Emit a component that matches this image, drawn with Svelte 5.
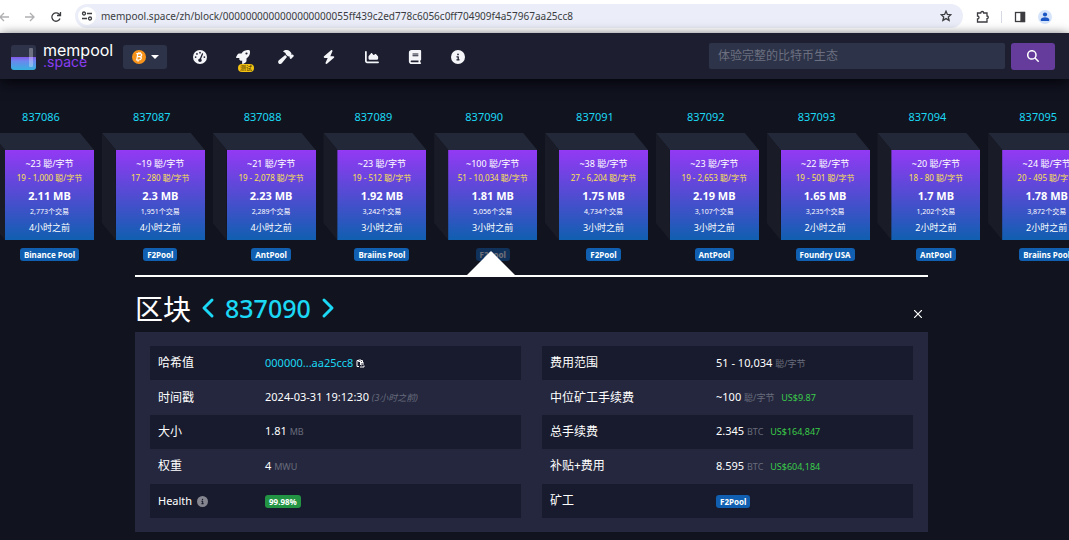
<script>
  const url = 'mempool.space/zh/block/0000000000000000000055ff439c2ed778c6056c0ff704909f4a57967aa25cc8';

  const blocks = [
    { height: 837086, fee: '~23', range: '19 - 1,000', size: '2.11 MB', txs: '2,773', hours: 4, pool: 'Binance Pool' },
    { height: 837087, fee: '~19', range: '17 - 280', size: '2.3 MB', txs: '1,951', hours: 4, pool: 'F2Pool' },
    { height: 837088, fee: '~21', range: '19 - 2,078', size: '2.23 MB', txs: '2,289', hours: 4, pool: 'AntPool' },
    { height: 837089, fee: '~23', range: '19 - 512', size: '1.92 MB', txs: '3,242', hours: 3, pool: 'Braiins Pool' },
    { height: 837090, fee: '~100', range: '51 - 10,034', size: '1.81 MB', txs: '5,056', hours: 3, pool: 'F2Pool' },
    { height: 837091, fee: '~38', range: '27 - 6,204', size: '1.75 MB', txs: '4,734', hours: 3, pool: 'F2Pool' },
    { height: 837092, fee: '~23', range: '19 - 2,653', size: '2.19 MB', txs: '3,107', hours: 3, pool: 'AntPool' },
    { height: 837093, fee: '~22', range: '19 - 501', size: '1.65 MB', txs: '3,235', hours: 2, pool: 'Foundry USA' },
    { height: 837094, fee: '~20', range: '18 - 80', size: '1.7 MB', txs: '1,202', hours: 2, pool: 'AntPool' },
    { height: 837095, fee: '~24', range: '20 - 495', size: '1.78 MB', txs: '3,872', hours: 2, pool: 'Braiins Pool' },
  ];

  let selected = $state(837090);

  const infoPath = 'M256 512A256 256 0 1 0 256 0a256 256 0 1 0 0 512zM216 336h24V272H216c-13.3 0-24-10.7-24-24s10.7-24 24-24h48c13.3 0 24 10.7 24 24v88h8c13.3 0 24 10.7 24 24s-10.7 24-24 24H216c-13.3 0-24-10.7-24-24s10.7-24 24-24zm40-208a32 32 0 1 1 0 64 32 32 0 1 1 0-64z';

  const nav = [
    { name: 'Dashboard', box: '0 0 512 512', path: 'M256 0a256 256 0 1 0 0 512a256 256 0 1 0 0-512zM256 64a32 32 0 1 1 0 64a32 32 0 1 1 0-64zM144 112a32 32 0 1 1 0 64a32 32 0 1 1 0-64zM96 224a32 32 0 1 1 0 64a32 32 0 1 1 0-64zM416 224a32 32 0 1 1 0 64a32 32 0 1 1 0-64zM357 119c12 5 18 19 13 31l-76 177c16 12 26 30 26 51c0 35-29 62-64 62s-64-27-64-62s29-66 58-66l76-180c5-12 19-18 31-13z' },
    { name: 'Accelerator', box: '0 0 512 512', beta: true, path: 'M156.6 384.9L125.7 354c-8.5-8.5-11.5-20.8-7.7-32.2c3-8.9 7-20.5 11.8-33.8L24 288c-8.6 0-16.6-4.6-20.9-12.1s-4.2-16.7 .2-24.1l52.5-88.5c13-21.9 36.5-35.3 61.9-35.3l82.3 0c2.4-4 4.8-7.7 7.2-11.3C289.1-4.1 411.1-8.1 483.9 5.3c11.6 2.1 20.6 11.2 22.8 22.8c13.4 72.9 9.3 194.8-111.4 276.7c-3.5 2.4-7.3 4.8-11.3 7.2v82.3c0 25.4-13.4 49-35.3 61.9l-88.5 52.5c-7.4 4.4-16.6 4.5-24.1 .2s-12.1-12.2-12.1-20.9V380.8c-14.1 4.9-26.4 8.9-35.7 11.9c-11.2 3.6-23.4 .5-31.8-7.8zM384 168a40 40 0 1 0 0-80 40 40 0 1 0 0 80z' },
    { name: 'Mining', box: '0 0 576 512', path: 'M413.5 237.5c-28.2 4.8-58.2-3.6-80-25.4l-38.1-38.1C280.4 159 272 138.8 272 117.6V105.5L192.3 62c-5.3-2.9-8.6-8.6-8.3-14.7s3.9-11.5 9.5-14l47.2-21C259.1 4.2 279 0 299.2 0h18.1c36.7 0 72 14 98.7 39.1l44.6 42c24.2 22.8 33.2 55.7 26.6 86L503 183l8-8c9.4-9.4 24.6-9.4 33.9 0l24 24c9.4 9.4 9.4 24.6 0 33.9l-88 88c-9.4 9.4-24.6 9.4-33.9 0l-24-24c-9.4-9.4-9.4-24.6 0-33.9l8-8-17.5-17.5zM27.4 377.1L260.9 182.6c3.5 4.9 7.5 9.6 11.8 14l38.1 38.1c6 6 12.4 11.2 19.2 15.7L134.9 484.6c-14.5 17.4-36 27.4-58.6 27.4C34.1 512 0 477.8 0 435.7c0-22.6 10.1-44.1 27.4-58.6z' },
    { name: 'Lightning', box: '0 0 448 512', path: 'M349.4 44.6c5.9-13.7 1.5-29.7-10.6-38.5s-28.6-8-39.9 1.8l-256 224c-10 8.8-13.6 22.9-8.9 35.3S50.7 288 64 288H175.5L98.6 467.4c-5.9 13.7-1.5 29.7 10.6 38.5s28.6 8 39.9-1.8l256-224c10-8.8 13.6-22.9 8.9-35.3s-16.6-20.7-30-20.7H272.5L349.4 44.6z' },
    { name: 'Graphs', box: '0 0 512 512', path: 'M64 64c0-17.7-14.3-32-32-32S0 46.3 0 64V400c0 44.2 35.8 80 80 80H480c17.7 0 32-14.3 32-32s-14.3-32-32-32H80c-8.8 0-16-7.2-16-16V64zm96 288H448c17.7 0 32-14.3 32-32V251.8c0-7.6-2.7-15-7.7-20.8l-65.8-76.8c-12.1-14.2-33.7-15-46.9-1.8l-21 21c-10 10-26.4 9.2-35.4-1.6l-39.2-47c-12.6-15.1-35.7-15.4-48.7-.6L135.9 215c-5.1 5.8-7.9 13.3-7.9 21.1v84c0 17.7 14.3 32 32 32z' },
    { name: 'Docs', box: '0 0 448 512', path: 'M96 0C43 0 0 43 0 96V416c0 53 43 96 96 96H384h32c17.7 0 32-14.3 32-32s-14.3-32-32-32V384c17.7 0 32-14.3 32-32V32c0-17.7-14.3-32-32-32H384 96zm0 384H352v64H96c-17.7 0-32-14.3-32-32s14.3-32 32-32zm32-240c0-8.8 7.2-16 16-16H336c8.8 0 16 7.2 16 16s-7.2 16-16 16H144c-8.8 0-16-7.2-16-16zm16 48H336c8.8 0 16 7.2 16 16s-7.2 16-16 16H144c-8.8 0-16-7.2-16-16s7.2-16 16-16z' },
    { name: 'About', box: '0 0 512 512', path: infoPath },
  ];
</script>

<div class="browser">
  <div class="browser-nav">
    <button class="plain faded" aria-label="Back">
      <svg width="12" height="12" viewBox="0 0 12 12"><path d="M11 6H2M6 2L2 6l4 4" /></svg>
    </button>
    <button class="plain faded" aria-label="Forward">
      <svg width="12" height="12" viewBox="0 0 12 12"><path d="M1 6h9M6 2l4 4-4 4" /></svg>
    </button>
    <button class="plain" aria-label="Reload">
      <svg width="12" height="12" viewBox="0 0 12 12"><path d="M10 7.500A4.200 4.200 0 1 1 9 3L10.300 4.300M10.500 1v3.500H7" /></svg>
    </button>
  </div>
  <div class="address">
    <button class="site-info" aria-label="Site information">
      <svg width="12" height="12" viewBox="0 0 12 12"><path d="M6 3.500h5M1 8.500h5" /><circle cx="3" cy="3.500" r="1.500" /><circle cx="9" cy="8.500" r="1.500" /></svg>
    </button>
    <input class="url" type="text" aria-label="Address" value={url} />
    <button class="plain" aria-label="Bookmark">
      <svg width="12" height="12" viewBox="0 0 12 12"><path d="M6 1.200l1.400 3.200 3.500.3-2.600 2.300.8 3.400L6 8.600l-3.100 1.800.8-3.400L1.100 4.700l3.500-.3z" /></svg>
    </button>
  </div>
  <div class="browser-tools">
    <button class="plain" aria-label="Extensions">
      <svg width="13" height="13" viewBox="0 0 13 13"><path d="M1.500 3h3.200a1.500 1.500 0 0 1 3 0H11v3a1.300 1.300 0 0 1 0 2.600V12H1.500V9a1.500 1.500 0 0 0 0-3z" /></svg>
    </button>
    <span class="separator"></span>
    <button class="plain" aria-label="Side panel">
      <svg width="12" height="12" viewBox="0 0 12 12"><rect x="1.500" y="1.500" width="9" height="9" /><rect x="7" y="1.500" width="3.500" height="9" fill="#3c3d41" /></svg>
    </button>
    <button class="plain" aria-label="Profile">
      <svg width="14" height="14" viewBox="0 0 14 14"><circle class="avatar" cx="7" cy="7" r="7" /><circle class="person" cx="7" cy="4.500" r="2.100" /><path class="person" d="M2.800 11V9.600C2.800 8 5.500 7.300 7 7.300s4.200.7 4.200 2.300V11z" /></svg>
    </button>
  </div>
</div>

<header>
  <a class="logo" href="#home">
    <svg width="25" height="25" viewBox="0 0 25 25">
      <defs>
        <linearGradient id="liquid" x1="0" y1="0" x2="0" y2="1">
          <stop offset="0" stop-color="#8557ea" />
          <stop offset="0.300" stop-color="#6c86ee" />
          <stop offset="1" stop-color="#35b2de" />
        </linearGradient>
      </defs>
      <path d="M3 0h19a3 3 0 0 1 3 3v10H0V3a3 3 0 0 1 3-3z" fill="#2e3349" />
      <path d="M0 12h25v10a3 3 0 0 1-3 3H3a3 3 0 0 1-3-3z" fill="url(#liquid)" />
      <rect x="18" y="3" width="4" height="19" rx="1" fill="#fff" opacity="0.300" />
    </svg>
    <span class="wordmark">mempool<span>.space</span></span>
  </a>

  <button class="network" aria-label="Network">
    <svg width="14" height="14" viewBox="0 0 14 14">
      <circle cx="7" cy="7" r="7" fill="#f7931a" />
      <path d="M5.800 3.600L4.700 10M4.300 3.600h3.800c2.500.1 2 3.100-.5 3.100H5.400h2.300c2.500.1 2 3.300-.8 3.300H3.800M7 2.200l-.3 1.400M6.200 10l-.3 1.600M8.500 2.400l-.3 1.400" fill="none" stroke="#fff" stroke-width="1.200" />
    </svg>
    <span class="caret"></span>
  </button>

  <nav>
    {#each nav as item}
      <a href="#{item.name}" aria-label={item.name}>
        <svg width="16" height="14" viewBox={item.box} fill-rule="evenodd"><path d={item.path} /></svg>
        {#if item.beta}<span class="beta">测试</span>{/if}
      </a>
    {/each}
  </nav>

  <form class="search">
    <input type="text" aria-label="Search" placeholder="体验完整的比特币生态" />
    <button type="button" aria-label="Search">
      <svg width="12" height="12" viewBox="0 0 512 512"><path d="M416 208c0 45.900-14.900 88.300-40 122.700L502.600 457.400c12.500 12.500 12.500 32.800 0 45.300s-32.800 12.500-45.300 0L330.700 376c-34.400 25.200-76.800 40-122.700 40C93.100 416 0 322.900 0 208S93.100 0 208 0S416 93.100 416 208zM208 352a144 144 0 1 0 0-288 144 144 0 1 0 0 288z" /></svg>
    </button>
  </form>
</header>

<main>
  <div class="chain">
    {#each blocks as block}
      <div class="block" class:selected={block.height === selected}>
        <a class="height" href="#{block.height}" onclick={() => (selected = block.height)}>{block.height}</a>
        <div class="cube">
          <div class="face">
            <div class="fee">{block.fee} 聪/字节</div>
            <div class="range">{block.range} 聪/字节</div>
            <div class="size">{block.size}</div>
            <div class="txs">{block.txs}个交易</div>
            <div class="time">{block.hours}小时之前</div>
          </div>
        </div>
        <a class="badge pool" href="#{block.pool}">{block.pool}</a>
      </div>
    {/each}
  </div>

  <section class="details">
    <div class="title">
      <h1>区块</h1>
      <button class="step" aria-label="Previous block" onclick={() => selected--}>
        <svg width="14" height="22" viewBox="0 0 14 22"><path d="M11 3L3 11l8 8" /></svg>
      </button>
      <a href="#{selected}">{selected}</a>
      <button class="step" aria-label="Next block" onclick={() => selected++}>
        <svg width="14" height="22" viewBox="0 0 14 22"><path d="M3 3l8 8-8 8" /></svg>
      </button>
      <button class="close" aria-label="Close">
        <svg width="8" height="8" viewBox="0 0 8 8"><path d="M0 0l8 8M8 0L0 8" /></svg>
      </button>
    </div>

    <div class="panel">
      <table class="left">
        <tbody>
          <tr>
            <th scope="row">哈希值</th>
            <td>
              <a href="#hash">000000...aa25cc8</a>
              <button class="copy" aria-label="Copy">
                <svg width="9" height="9" viewBox="0 0 9 9"><path d="M3 7.500H1V1.500h1.500M5 1.500h1.500V3M2.500 1h2.500v1.500H2.500zM4 3.500h3.500M8 5H4M5.500 3.800L4 5l1.500 1.200M4 8h4V6.500" /></svg>
              </button>
            </td>
          </tr>
          <tr><th scope="row">时间戳</th><td>2024-03-31 19:12:30 <i class="unit">(3小时之前)</i></td></tr>
          <tr><th scope="row">大小</th><td>1.81 <span class="unit">MB</span></td></tr>
          <tr><th scope="row">权重</th><td>4 <span class="unit">MWU</span></td></tr>
          <tr>
            <th scope="row" class="latin">Health <svg class="info" width="11" height="11" viewBox="0 0 512 512"><path fill-rule="evenodd" d={infoPath} /></svg></th>
            <td><span class="badge health">99.98%</span></td>
          </tr>
        </tbody>
      </table>

      <table class="right">
        <tbody>
          <tr><th scope="row">费用范围</th><td>51 - 10,034 <span class="unit">聪/字节</span></td></tr>
          <tr><th scope="row">中位矿工手续费</th><td>~100 <span class="unit">聪/字节</span> <span class="fiat">US$9.87</span></td></tr>
          <tr><th scope="row">总手续费</th><td>2.345 <span class="unit">BTC</span> <span class="fiat">US$164,847</span></td></tr>
          <tr><th scope="row">补贴+费用</th><td>8.595 <span class="unit">BTC</span> <span class="fiat">US$604,184</span></td></tr>
          <tr><th scope="row">矿工</th><td><a class="badge" href="#F2Pool">F2Pool</a></td></tr>
        </tbody>
      </table>
    </div>
  </section>
</main>

<style>
  :global(body) {
    background: #11131f;
    color: #fff;
    font-family: "Noto Sans", "Noto Sans CJK SC", sans-serif;
    font-size: 11px;
    overflow-x: hidden;
  }

  a {
    color: #1bd8f4;
    text-decoration: none;
  }

  button {
    border: 0;
    padding: 0;
    background: none;
    color: inherit;
    font: inherit;
    cursor: pointer;
  }

  svg {
    display: block;
  }

  /* Browser toolbar */

  .browser {
    display: flex;
    align-items: center;
    height: 33px;
    background: #fff;
  }

  .browser-nav {
    display: flex;
    gap: 14px;
    width: 75px;
  }

  .browser-nav .plain:first-child {
    margin-left: -2px;
  }

  .browser svg {
    fill: none;
    stroke: #3c3d41;
    stroke-width: 1.300;
  }

  .browser .faded svg {
    stroke: #b0b0b3;
  }

  .address {
    display: flex;
    align-items: center;
    flex: 1;
    height: 24px;
    padding: 0 11px 0 3px;
    border-radius: 12px;
    background: #ebeef8;
    margin-bottom: 1px;
  }

  .site-info {
    display: grid;
    place-items: center;
    width: 18px;
    height: 18px;
    border-radius: 50%;
    background: #fff;
  }

  .url {
    flex: 1;
    min-width: 0;
    margin-left: 5px;
    padding: 0;
    border: 0;
    outline: 0;
    background: none;
    color: #3a3c42;
    font: 10px "Noto Sans", sans-serif;
  }

  .browser-tools {
    display: flex;
    align-items: center;
    gap: 12px;
    padding: 0 17px 0 13px;
  }

  .separator {
    width: 1px;
    height: 12px;
    background: #d5d9e4;
  }

  .browser .avatar {
    fill: #d5e4fb;
    stroke: none;
  }

  .browser .person {
    fill: #1a56c4;
    stroke: none;
  }

  /* Site header */

  header {
    position: relative;
    z-index: 1;
    display: flex;
    align-items: center;
    height: 44px;
    padding: 2px 14px 0 11px;
    background: #1d1f31;
    box-shadow: 0 4px 12px #04050b;
  }

  .logo {
    display: flex;
    align-items: center;
    gap: 7px;
    width: 112px;
  }

  .wordmark {
    color: #fff;
    font: 16px/12px Inter, sans-serif;
    padding-bottom: 3px;
  }

  .wordmark span {
    display: block;
    color: #8a3df0;
    font-size: 14px;
  }

  .network {
    display: flex;
    align-items: center;
    justify-content: center;
    gap: 5px;
    width: 44px;
    height: 24px;
    border-radius: 3px;
    background: #2d3348;
  }

  .caret {
    border: 4px solid transparent;
    border-top-color: #fff;
    border-bottom: 0;
  }

  nav {
    display: flex;
    margin-left: 11px;
  }

  nav a {
    position: relative;
    display: grid;
    place-items: center;
    width: 43px;
    height: 44px;
  }

  nav svg {
    fill: #f4f5f8;
  }

  .beta {
    position: absolute;
    left: 17px;
    top: 29px;
    width: 16px;
    border-radius: 4px;
    background: #f5c211;
    color: #3a2c00;
    font-size: 6px;
    line-height: 8px;
    text-align: center;
  }

  .search {
    display: flex;
    gap: 6px;
    flex: 1;
    max-width: 346px;
    margin: 0 0 2px auto;
  }

  .search input {
    flex: 1;
    min-width: 0;
    height: 26px;
    box-sizing: border-box;
    padding: 0 9px;
    border: 0;
    border-radius: 2px;
    background: #2d3348;
    color: #fff;
    font: inherit;
    font-size: 12px;
  }

  .search input::placeholder {
    color: #6c7080;
  }

  .search button {
    display: grid;
    place-items: center;
    width: 44px;
    height: 27px;
    border-radius: 3px;
    background: #653b9c;
  }

  .search svg {
    fill: #fff;
  }

  /* Blockchain */

  main {
    overflow: hidden;
    padding-right: 6px;
  }

  .chain {
    display: grid;
    grid-template-columns: repeat(10, 1fr);
    width: 1108px;
    margin-left: -9px;
    padding-top: 30px;
  }

  .block {
    position: relative;
    display: flex;
    flex-direction: column;
    width: 103px;
    height: 166px;
  }

  .height {
    margin-right: 3px;
    line-height: 16px;
    text-align: center;
  }

  .cube {
    position: relative;
    margin: 8px 0;
    padding: 17px 0 0 14px;
  }

  .cube::before,
  .cube::after {
    content: "";
    position: absolute;
    inset: 0;
  }

  .cube::before {
    background: #232838;
    clip-path: polygon(0 0, calc(100% - 14px) 0, 100% 17px, 14px 17px);
  }

  .cube::after {
    background: #191c27;
    clip-path: polygon(0 0, 14px 17px, 14px 100%, 0 calc(100% - 17px));
  }

  .face {
    padding: 7px 0 1px;
    background: linear-gradient(#9339f4, #105fb0);
    text-align: center;
    white-space: nowrap;
  }

  .fee {
    font-size: 9px;
    line-height: 14px;
  }

  .range {
    color: #fde152;
    font-size: 8px;
    line-height: 14px;
  }

  .size {
    font-weight: bold;
    line-height: 22px;
  }

  .txs {
    font-size: 7px;
    line-height: 10px;
  }

  .time {
    font-size: 9px;
    line-height: 22px;
  }

  .badge {
    display: inline-block;
    padding: 0 4px;
    border-radius: 3px;
    background: #105fb0;
    color: #fff;
    font-size: 8px;
    font-weight: bold;
    line-height: 13px;
    white-space: nowrap;
  }

  .pool {
    align-self: center;
    margin-left: 14px;
  }

  .selected .pool {
    opacity: 0.400;
  }

  .selected::after {
    content: "";
    position: absolute;
    left: 33px;
    bottom: 0;
    border: 24px solid transparent;
    border-top: 0;
    border-bottom-color: #fff;
  }

  /* Block details */

  .details {
    max-width: 793px;
    margin: 0 auto;
    border-top: 2px solid #fff;
  }

  .title {
    display: flex;
    align-items: center;
    height: 48px;
    padding: 7px 5px 0 0;
    font-size: 25px;
    font-weight: 500;
  }

  h1 {
    margin: 0;
    font-size: 28px;
    font-weight: 400;
  }

  .step {
    margin: 0 10px;
  }

  .step svg {
    fill: none;
    stroke: #1bd8f4;
    stroke-width: 3;
    stroke-linecap: round;
    stroke-linejoin: round;
  }

  .close {
    margin-left: auto;
    padding: 12px 1px 0;
  }

  .close svg {
    stroke: #fff;
    stroke-width: 1.200;
  }

  .panel {
    display: grid;
    grid-template-columns: 1fr 1fr;
    gap: 21px;
    padding: 14px 15px;
    background: #24273e;
  }

  table {
    width: 100%;
    height: 172px;
    border-collapse: collapse;
    table-layout: fixed;
  }

  tr:nth-child(odd) {
    background: #181b2d;
  }

  th,
  td {
    height: 34px;
    padding: 0;
    font-weight: 400;
    line-height: 16px;
    text-align: left;
    white-space: nowrap;
  }

  th {
    padding-left: 8px;
    font-size: 12px;
  }

  .left th {
    width: 107px;
  }

  .right th {
    width: 166px;
  }

  .latin {
    font-size: 11px;
  }

  .info {
    display: inline-block;
    margin-left: 2px;
    vertical-align: -2px;
    fill: #84858e;
  }

  .copy {
    vertical-align: -1px;
  }

  .copy svg {
    fill: none;
    stroke: #fff;
  }

  .unit {
    color: #686c7c;
    font-size: 9px;
  }

  .fiat {
    margin-left: 4px;
    color: #3bcc49;
    font-size: 9px;
  }

  .health {
    background: #239444;
  }
</style>
